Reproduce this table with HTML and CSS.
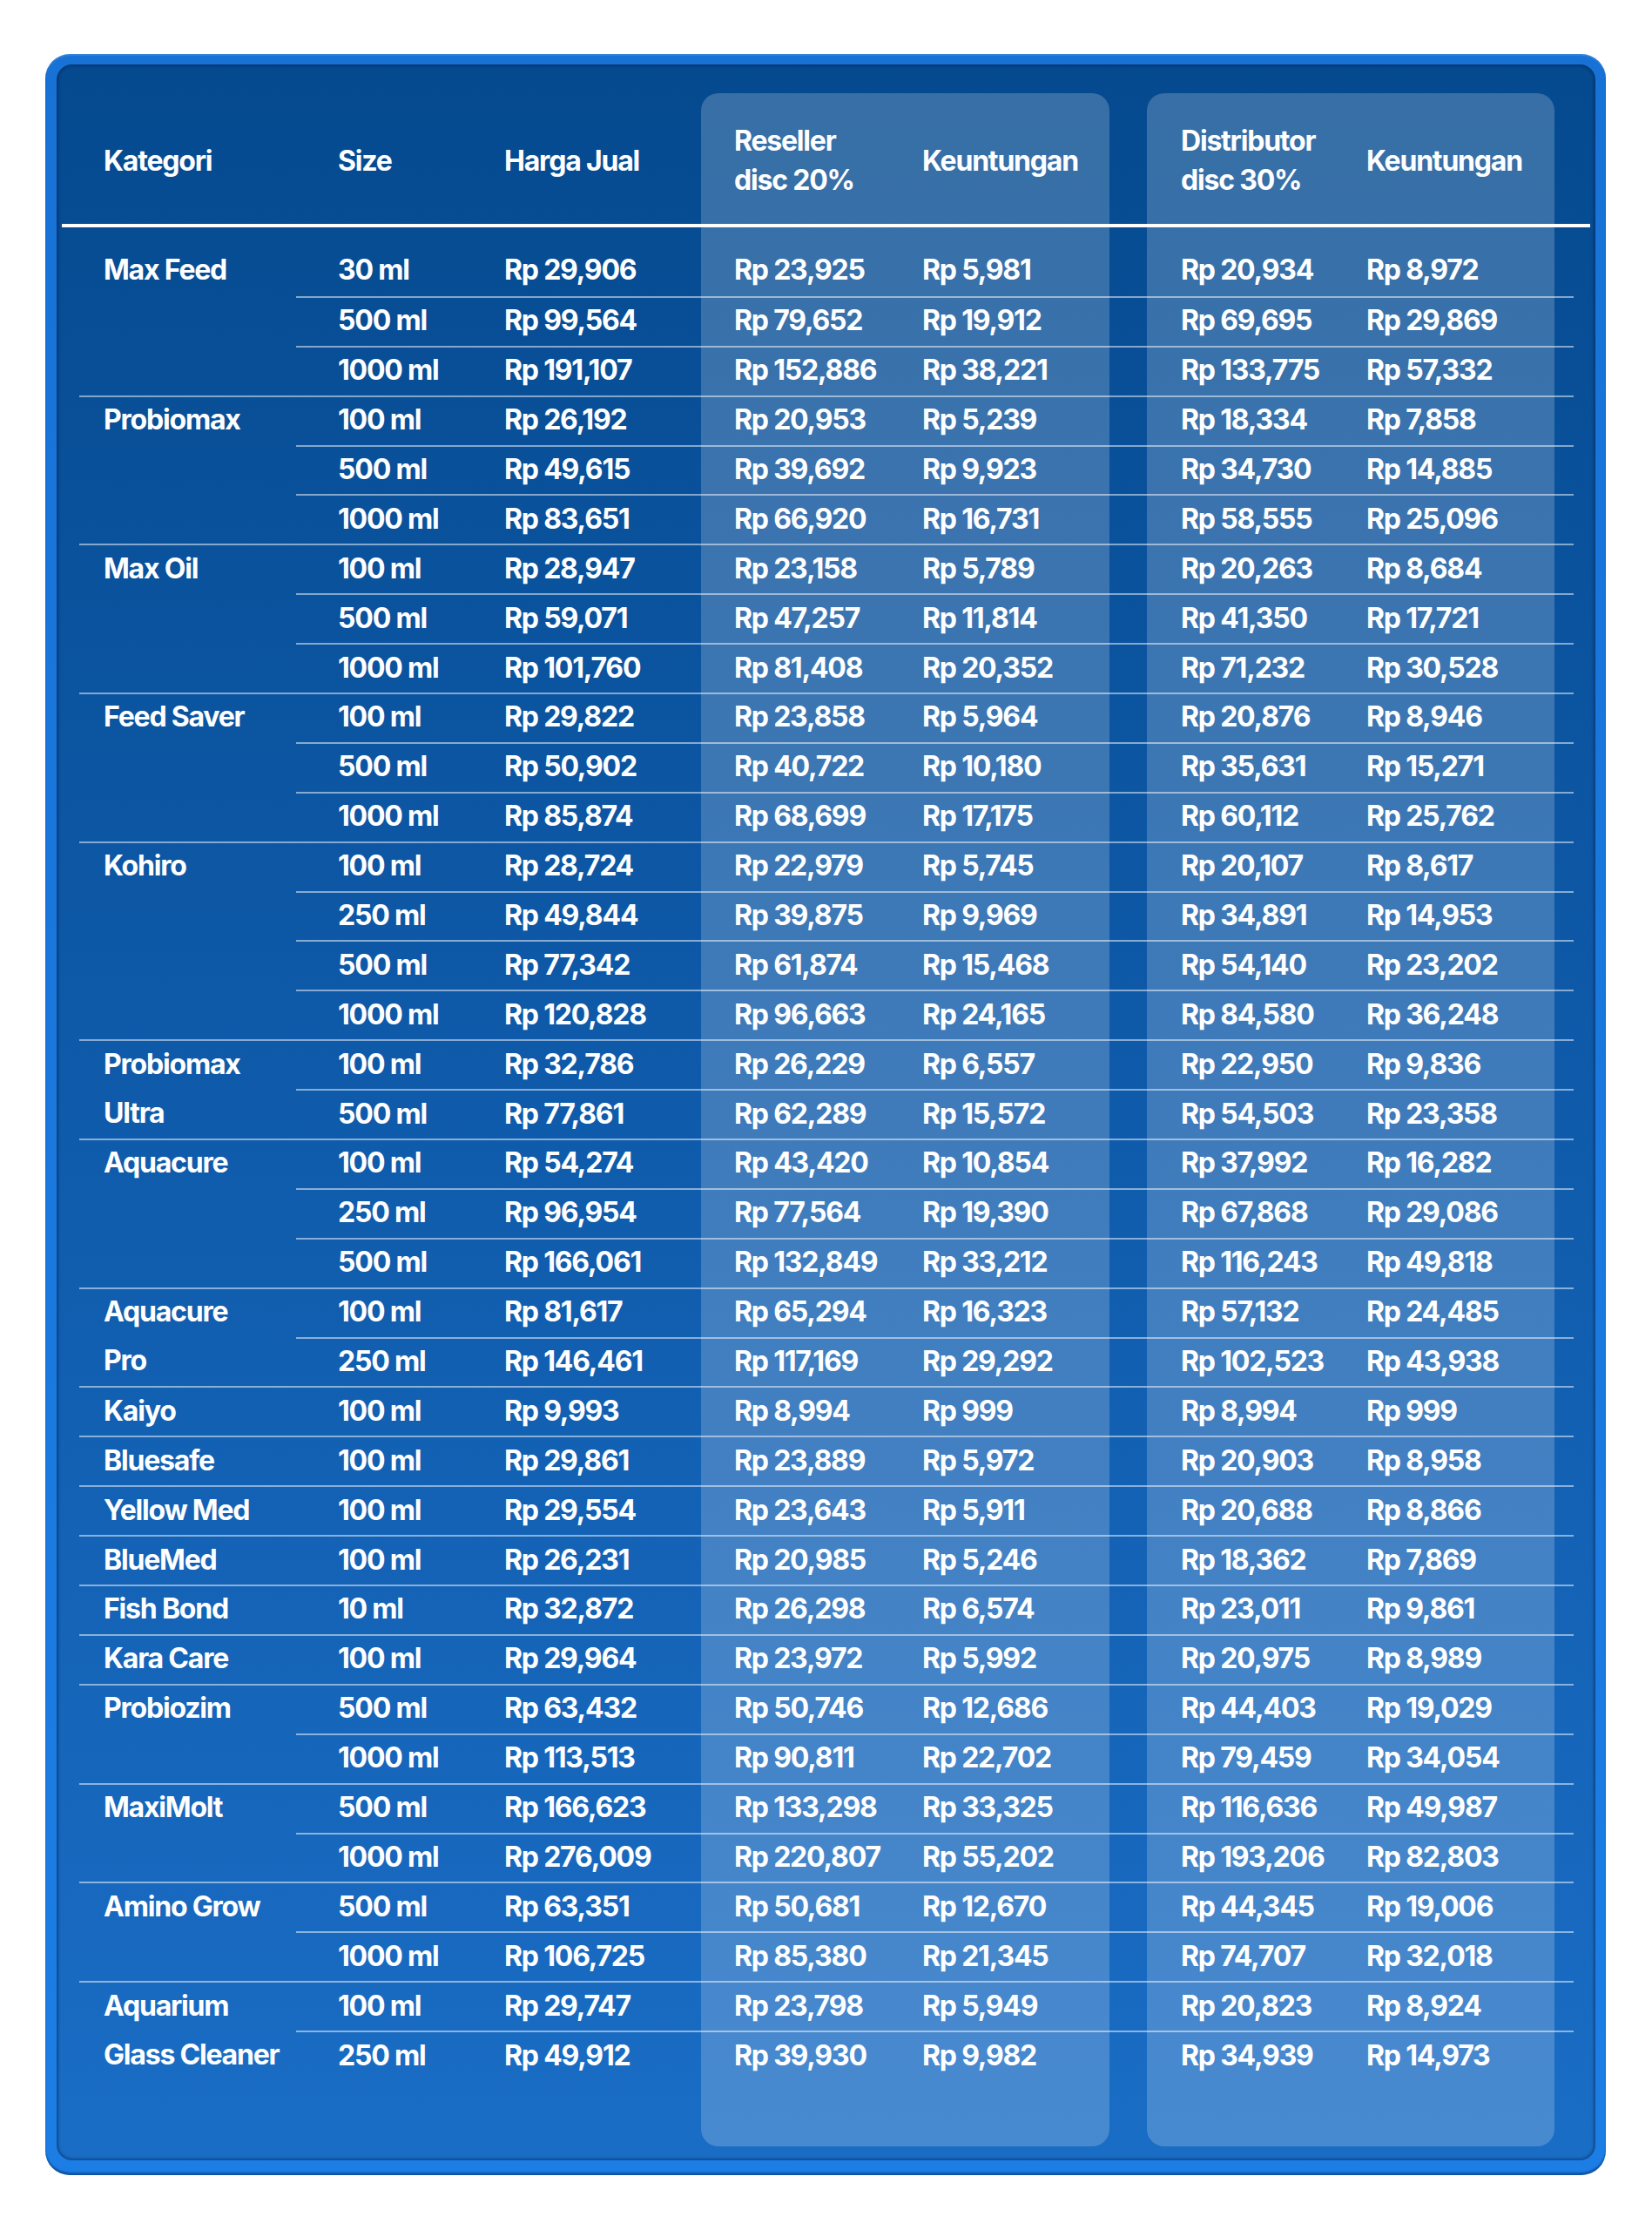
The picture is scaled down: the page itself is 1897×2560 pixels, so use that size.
FILE: index.html
```html
<!DOCTYPE html>
<html lang="id">
<head>
<meta charset="utf-8">
<title>Daftar Harga</title>
<link rel="stylesheet" href="styles.css">
</head>
<body>
<div class="card">
  <div class="inner">
    <div class="panels">
      <div class="panel"></div>
      <div class="panel p2"></div>
    </div>
    <div class="table">
      <div class="hdr">
        <div class="kat">Kategori</div>
        <div class="vals">
          <span>Size</span><span>Harga Jual</span><span>Reseller<br>disc 20%</span><span>Keuntungan</span><span>Distributor<br>disc 30%</span><span>Keuntungan</span>
        </div>
      </div>

      <div class="row g first"><div class="kat">Max Feed</div><div class="vals"><span>30 ml</span><span>Rp 29,906</span><span>Rp 23,925</span><span>Rp 5,981</span><span>Rp 20,934</span><span>Rp 8,972</span></div></div>
      <div class="row"><div class="kat"></div><div class="vals"><span>500 ml</span><span>Rp 99,564</span><span>Rp 79,652</span><span>Rp 19,912</span><span>Rp 69,695</span><span>Rp 29,869</span></div></div>
      <div class="row"><div class="kat"></div><div class="vals"><span>1000 ml</span><span>Rp 191,107</span><span>Rp 152,886</span><span>Rp 38,221</span><span>Rp 133,775</span><span>Rp 57,332</span></div></div>

      <div class="row g"><div class="kat">Probiomax</div><div class="vals"><span>100 ml</span><span>Rp 26,192</span><span>Rp 20,953</span><span>Rp 5,239</span><span>Rp 18,334</span><span>Rp 7,858</span></div></div>
      <div class="row"><div class="kat"></div><div class="vals"><span>500 ml</span><span>Rp 49,615</span><span>Rp 39,692</span><span>Rp 9,923</span><span>Rp 34,730</span><span>Rp 14,885</span></div></div>
      <div class="row"><div class="kat"></div><div class="vals"><span>1000 ml</span><span>Rp 83,651</span><span>Rp 66,920</span><span>Rp 16,731</span><span>Rp 58,555</span><span>Rp 25,096</span></div></div>

      <div class="row g"><div class="kat">Max Oil</div><div class="vals"><span>100 ml</span><span>Rp 28,947</span><span>Rp 23,158</span><span>Rp 5,789</span><span>Rp 20,263</span><span>Rp 8,684</span></div></div>
      <div class="row"><div class="kat"></div><div class="vals"><span>500 ml</span><span>Rp 59,071</span><span>Rp 47,257</span><span>Rp 11,814</span><span>Rp 41,350</span><span>Rp 17,721</span></div></div>
      <div class="row"><div class="kat"></div><div class="vals"><span>1000 ml</span><span>Rp 101,760</span><span>Rp 81,408</span><span>Rp 20,352</span><span>Rp 71,232</span><span>Rp 30,528</span></div></div>

      <div class="row g"><div class="kat">Feed Saver</div><div class="vals"><span>100 ml</span><span>Rp 29,822</span><span>Rp 23,858</span><span>Rp 5,964</span><span>Rp 20,876</span><span>Rp 8,946</span></div></div>
      <div class="row"><div class="kat"></div><div class="vals"><span>500 ml</span><span>Rp 50,902</span><span>Rp 40,722</span><span>Rp 10,180</span><span>Rp 35,631</span><span>Rp 15,271</span></div></div>
      <div class="row"><div class="kat"></div><div class="vals"><span>1000 ml</span><span>Rp 85,874</span><span>Rp 68,699</span><span>Rp 17,175</span><span>Rp 60,112</span><span>Rp 25,762</span></div></div>

      <div class="row g"><div class="kat">Kohiro</div><div class="vals"><span>100 ml</span><span>Rp 28,724</span><span>Rp 22,979</span><span>Rp 5,745</span><span>Rp 20,107</span><span>Rp 8,617</span></div></div>
      <div class="row"><div class="kat"></div><div class="vals"><span>250 ml</span><span>Rp 49,844</span><span>Rp 39,875</span><span>Rp 9,969</span><span>Rp 34,891</span><span>Rp 14,953</span></div></div>
      <div class="row"><div class="kat"></div><div class="vals"><span>500 ml</span><span>Rp 77,342</span><span>Rp 61,874</span><span>Rp 15,468</span><span>Rp 54,140</span><span>Rp 23,202</span></div></div>
      <div class="row"><div class="kat"></div><div class="vals"><span>1000 ml</span><span>Rp 120,828</span><span>Rp 96,663</span><span>Rp 24,165</span><span>Rp 84,580</span><span>Rp 36,248</span></div></div>

      <div class="row g"><div class="kat">Probiomax</div><div class="vals"><span>100 ml</span><span>Rp 32,786</span><span>Rp 26,229</span><span>Rp 6,557</span><span>Rp 22,950</span><span>Rp 9,836</span></div></div>
      <div class="row"><div class="kat">Ultra</div><div class="vals"><span>500 ml</span><span>Rp 77,861</span><span>Rp 62,289</span><span>Rp 15,572</span><span>Rp 54,503</span><span>Rp 23,358</span></div></div>

      <div class="row g"><div class="kat">Aquacure</div><div class="vals"><span>100 ml</span><span>Rp 54,274</span><span>Rp 43,420</span><span>Rp 10,854</span><span>Rp 37,992</span><span>Rp 16,282</span></div></div>
      <div class="row"><div class="kat"></div><div class="vals"><span>250 ml</span><span>Rp 96,954</span><span>Rp 77,564</span><span>Rp 19,390</span><span>Rp 67,868</span><span>Rp 29,086</span></div></div>
      <div class="row"><div class="kat"></div><div class="vals"><span>500 ml</span><span>Rp 166,061</span><span>Rp 132,849</span><span>Rp 33,212</span><span>Rp 116,243</span><span>Rp 49,818</span></div></div>

      <div class="row g"><div class="kat">Aquacure</div><div class="vals"><span>100 ml</span><span>Rp 81,617</span><span>Rp 65,294</span><span>Rp 16,323</span><span>Rp 57,132</span><span>Rp 24,485</span></div></div>
      <div class="row"><div class="kat">Pro</div><div class="vals"><span>250 ml</span><span>Rp 146,461</span><span>Rp 117,169</span><span>Rp 29,292</span><span>Rp 102,523</span><span>Rp 43,938</span></div></div>

      <div class="row g"><div class="kat">Kaiyo</div><div class="vals"><span>100 ml</span><span>Rp 9,993</span><span>Rp 8,994</span><span>Rp 999</span><span>Rp 8,994</span><span>Rp 999</span></div></div>
      <div class="row g"><div class="kat">Bluesafe</div><div class="vals"><span>100 ml</span><span>Rp 29,861</span><span>Rp 23,889</span><span>Rp 5,972</span><span>Rp 20,903</span><span>Rp 8,958</span></div></div>
      <div class="row g"><div class="kat">Yellow Med</div><div class="vals"><span>100 ml</span><span>Rp 29,554</span><span>Rp 23,643</span><span>Rp 5,911</span><span>Rp 20,688</span><span>Rp 8,866</span></div></div>
      <div class="row g"><div class="kat">BlueMed</div><div class="vals"><span>100 ml</span><span>Rp 26,231</span><span>Rp 20,985</span><span>Rp 5,246</span><span>Rp 18,362</span><span>Rp 7,869</span></div></div>
      <div class="row g"><div class="kat">Fish Bond</div><div class="vals"><span>10 ml</span><span>Rp 32,872</span><span>Rp 26,298</span><span>Rp 6,574</span><span>Rp 23,011</span><span>Rp 9,861</span></div></div>
      <div class="row g"><div class="kat">Kara Care</div><div class="vals"><span>100 ml</span><span>Rp 29,964</span><span>Rp 23,972</span><span>Rp 5,992</span><span>Rp 20,975</span><span>Rp 8,989</span></div></div>

      <div class="row g"><div class="kat">Probiozim</div><div class="vals"><span>500 ml</span><span>Rp 63,432</span><span>Rp 50,746</span><span>Rp 12,686</span><span>Rp 44,403</span><span>Rp 19,029</span></div></div>
      <div class="row"><div class="kat"></div><div class="vals"><span>1000 ml</span><span>Rp 113,513</span><span>Rp 90,811</span><span>Rp 22,702</span><span>Rp 79,459</span><span>Rp 34,054</span></div></div>

      <div class="row g"><div class="kat">MaxiMolt</div><div class="vals"><span>500 ml</span><span>Rp 166,623</span><span>Rp 133,298</span><span>Rp 33,325</span><span>Rp 116,636</span><span>Rp 49,987</span></div></div>
      <div class="row"><div class="kat"></div><div class="vals"><span>1000 ml</span><span>Rp 276,009</span><span>Rp 220,807</span><span>Rp 55,202</span><span>Rp 193,206</span><span>Rp 82,803</span></div></div>

      <div class="row g"><div class="kat">Amino Grow</div><div class="vals"><span>500 ml</span><span>Rp 63,351</span><span>Rp 50,681</span><span>Rp 12,670</span><span>Rp 44,345</span><span>Rp 19,006</span></div></div>
      <div class="row"><div class="kat"></div><div class="vals"><span>1000 ml</span><span>Rp 106,725</span><span>Rp 85,380</span><span>Rp 21,345</span><span>Rp 74,707</span><span>Rp 32,018</span></div></div>

      <div class="row g"><div class="kat">Aquarium</div><div class="vals"><span>100 ml</span><span>Rp 29,747</span><span>Rp 23,798</span><span>Rp 5,949</span><span>Rp 20,823</span><span>Rp 8,924</span></div></div>
      <div class="row"><div class="kat">Glass Cleaner</div><div class="vals"><span>250 ml</span><span>Rp 49,912</span><span>Rp 39,930</span><span>Rp 9,982</span><span>Rp 34,939</span><span>Rp 14,973</span></div></div>
    </div>
  </div>
</div>
</body>
</html>
```

FILE: styles.css
```css
html, body {
  margin: 0;
  padding: 0;
  background: #ffffff;
}

body {
  font-family: Inter, Lato, "Liberation Sans", "DejaVu Sans", sans-serif;
  font-weight: 700;
  font-size: 32px;
  letter-spacing: -1.2px;
  color: #ffffff;
}

.card {
  margin: 62px 0 0 52px;
  width: 1792px;
  height: 2435px;
  box-sizing: border-box;
  padding: 12px 12px 17px 13px;
  border-radius: 28px;
  background: linear-gradient(180deg, #1872d6 0%, #1c7ee5 100%);
  box-shadow: inset 0 -3px 2px rgba(5, 50, 110, 0.55), inset 0 2px 1px rgba(255, 255, 255, 0.12);
}

.inner {
  height: 100%;
  box-sizing: border-box;
  border-radius: 18px;
  background: linear-gradient(180deg, #054a8f 0%, #0e59a8 45%, #1a6dc5 100%);
  box-shadow: inset 0 0 3px 2px rgba(2, 30, 75, 0.45);
  padding: 33px 6px 16px;
  display: grid;
  grid-template-columns: 1fr;
  grid-template-rows: 1fr;
}

.panels,
.table {
  grid-area: 1 / 1;
}

.panels {
  display: flex;
  gap: 43px;
  padding-left: 734px;
}

.panel {
  width: 469px;
  border-radius: 20px;
  background: rgba(255, 255, 255, 0.2);
}

.panel.p2 {
  width: 468px;
}

.hdr {
  display: flex;
  height: 154px;
  box-sizing: border-box;
  border-bottom: 4px solid #ffffff;
  padding: 4px 19px 0 20px;
  margin-bottom: 22px;
  line-height: 45px;
}

.row {
  display: flex;
  height: 56.9px;
  padding: 0 19px 0 20px;
  box-sizing: border-box;
  line-height: 40px;
}

.kat {
  width: 249px;
  flex: none;
  box-sizing: border-box;
  padding-left: 28px;
  display: flex;
  align-items: center;
  white-space: nowrap;
}

.vals {
  flex: 1;
  display: grid;
  grid-template-columns: 239px 226px 254px 258px 252px 237px;
  align-items: center;
  white-space: nowrap;
}

.vals > span:nth-child(1) {
  padding-left: 48px;
}

.vals > span:nth-child(3) {
  padding-left: 38px;
}

.vals > span:nth-child(5) {
  padding-left: 39px;
}

.row .vals {
  border-top: 2px solid rgba(255, 255, 255, 0.5);
  padding-bottom: 2px;
}

.row .kat {
  padding-bottom: 2px;
}

.row.g .kat {
  border-top: 2px solid rgba(255, 255, 255, 0.5);
}

.row.first .kat,
.row.first .vals {
  border-top: 0;
}
```
